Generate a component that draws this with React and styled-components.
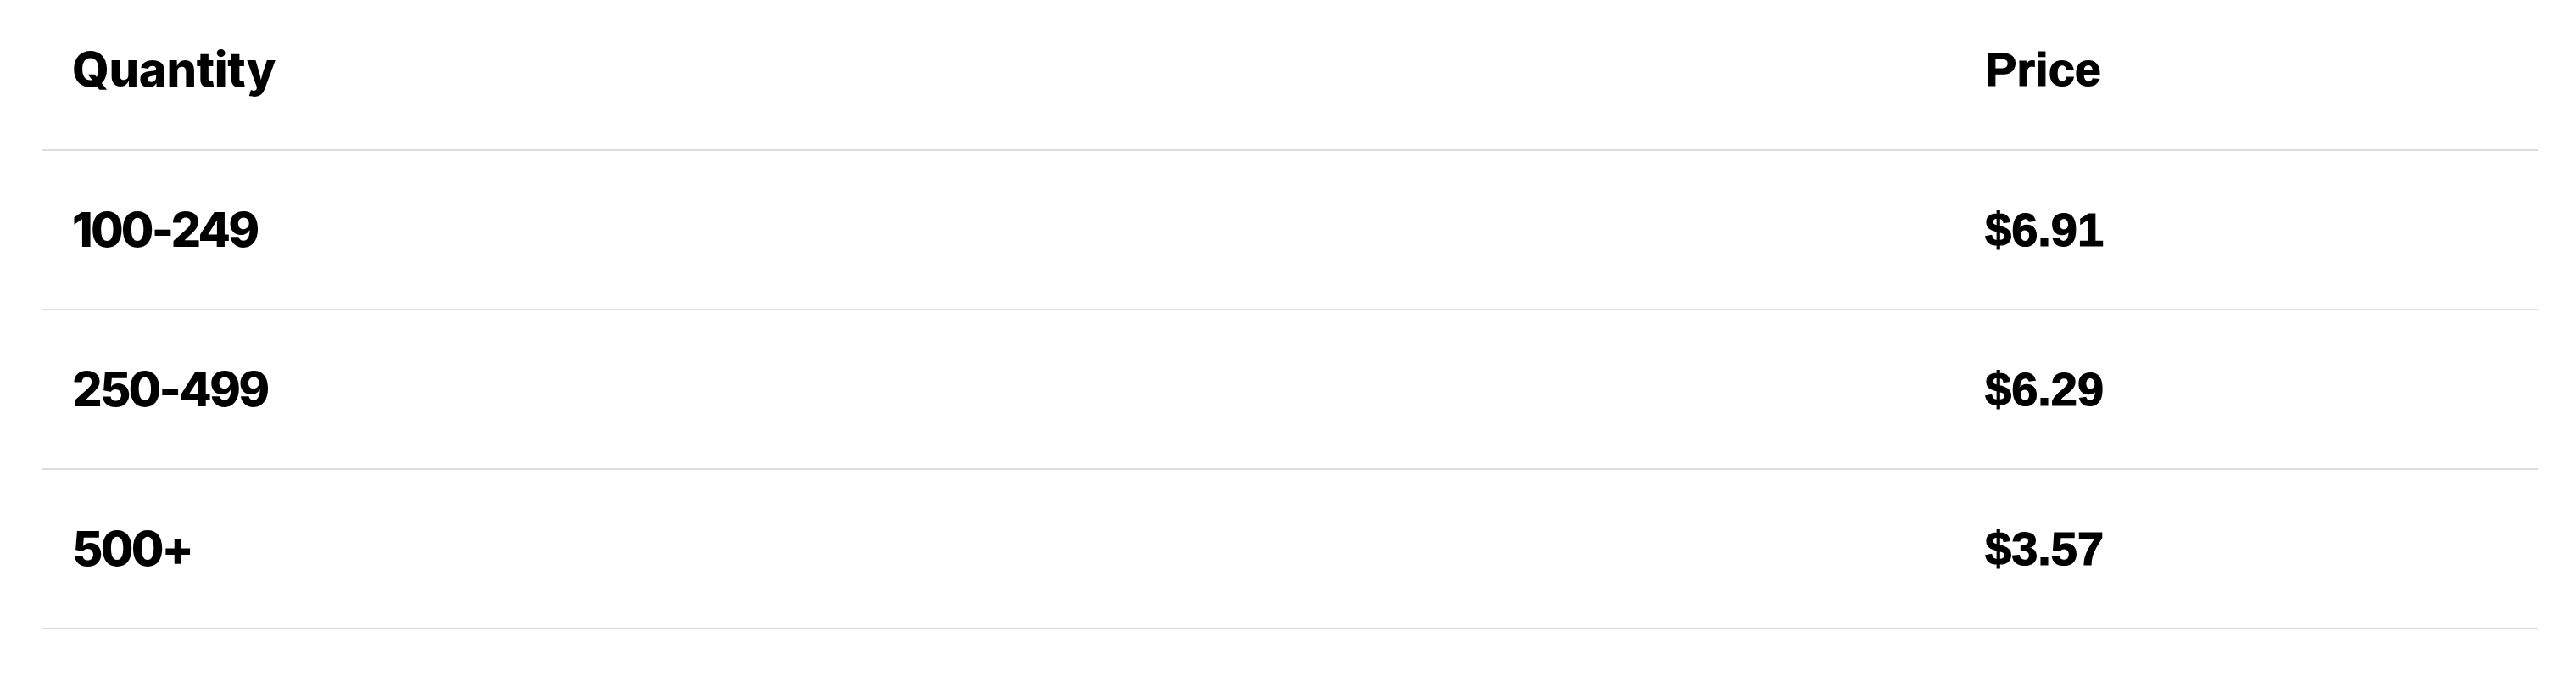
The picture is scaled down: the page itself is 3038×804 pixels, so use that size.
import React from "react";
import styled, { createGlobalStyle, css } from "styled-components";

const Global = createGlobalStyle`
  html, body { margin: 0; padding: 0; background: #ffffff; }
  body { font-family: "Liberation Sans", Arial, sans-serif; color: #000; }
`;

const Table = styled.div`
  margin: 0 45px 0 49px;
  display: flex;
  flex-direction: column;
`;

const Row = styled.div`
  display: grid;
  grid-template-columns: 2256px 1fr;
  align-items: center;
  box-sizing: content-box;
  height: ${(p) => (p.$head ? "164px" : "186px")};
  padding-bottom: ${(p) => (p.$head ? "12px" : "0")};
  border-bottom: 2px solid #dcdcdc;
`;

const Cell = styled.div`
  padding: 0 36px;
  font-size: 56px;
  line-height: 1;
  color: #000;
  white-space: nowrap;
  ${(p) =>
    p.$geo
      ? css`
          font-family: Inter, "Liberation Sans", sans-serif;
          font-weight: 800;
          letter-spacing: ${p.$num ? "-2.8px" : "-0.3px"};
        `
      : css`
          font-family: "Liberation Sans", Arial, sans-serif;
          font-weight: 700;
          -webkit-text-stroke: 1.2px #000;
        `}
`;

const rows = [
  { qty: "100-249", price: "$6.91" },
  { qty: "250-499", price: "$6.29" },
  { qty: "500+", price: "$3.57" },
];

export default function App() {
  return (
    <>
      <Global />
      <Table>
        <Row $head>
          <Cell $geo>Quantity</Cell>
          <Cell>Price</Cell>
        </Row>
        {rows.map((r) => (
          <Row key={r.qty}>
            <Cell $geo $num>
              {r.qty}
            </Cell>
            <Cell>{r.price}</Cell>
          </Row>
        ))}
      </Table>
    </>
  );
}
